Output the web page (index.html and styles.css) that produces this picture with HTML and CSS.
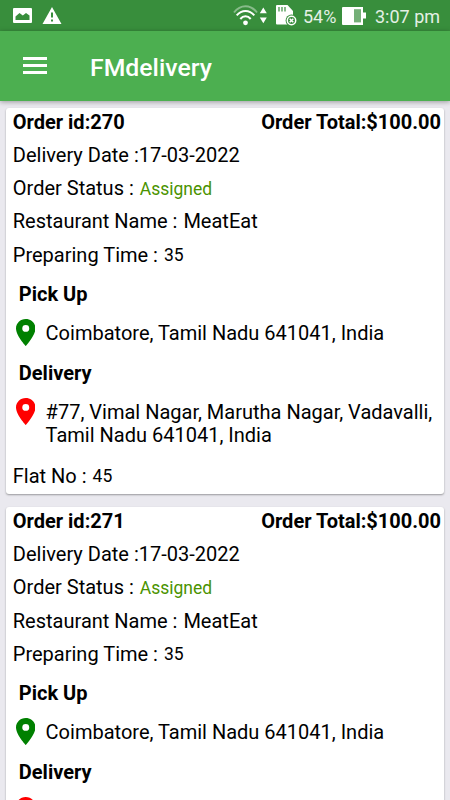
FILE: index.html
```html
<!DOCTYPE html>
<html lang="en">
<head>
    <meta charset="UTF-8">
    <meta name="viewport" content="width=device-width, initial-scale=1.0">
    <title>FMdelivery</title>
    <link rel="stylesheet" href="styles.css">
</head>
<body>
    <!-- Shared map pin shape -->
    <svg class="sprite" width="0" height="0">
        <symbol id="pin" viewBox="5 2 14 20" preserveAspectRatio="none">
            <path d="M12 2C8.13 2 5 5.13 5 9c0 5.25 7 13 7 13s7-7.75 7-13c0-3.87-3.13-7-7-7zm0 9.5a2.5 2.5 0 0 1 0-5 2.5 2.5 0 0 1 0 5z"/>
        </symbol>
    </svg>

    <div class="status-bar">
        <svg class="icon-image" width="19" height="15" viewBox="0 0 19 15">
            <path fill="#fff" fill-rule="evenodd" d="M1 0h17a1 1 0 0 1 1 1v13a1 1 0 0 1-1 1H1a1 1 0 0 1-1-1V1a1 1 0 0 1 1-1zM2.500 12h14V7.500L13 5 9.800 7.500 6.500 5 2.500 8.500z"/>
        </svg>
        <svg class="icon-warning" width="20" height="18" viewBox="0 0 20 18">
            <path fill="#fff" fill-rule="evenodd" d="M10 0l9.500 17H.5zM9 5.500v5h2v-5zM9 12.500v2h2v-2z"/>
        </svg>
        <div class="status-right">
            <svg class="icon-wifi" width="34" height="21" viewBox="0 0 34 21">
                <g fill="none" stroke="#fff" stroke-width="2">
                    <path stroke-opacity=".4" d="M1 7.500C7.500-.8 17.500-.8 24 7.500"/>
                    <path d="M3.700 10.300c5-5.800 12.600-5.800 17.600 0"/>
                    <path d="M7.300 14c3-3.700 7.400-3.700 10.400 0"/>
                </g>
                <circle cx="12.500" cy="17.800" r="2.400" fill="#fff"/>
                <path fill="#fff" d="M30.300 2.500l3.500 5.700h-7zM30.300 18.300l3.500-5.700h-7z"/>
            </svg>
            <svg class="icon-sd" width="21" height="21" viewBox="0 0 21 21">
                <path fill="#fff" d="M1 0h10.500L17 6v13.500H1a1 1 0 0 1-1-1V1a1 1 0 0 1 1-1z"/>
                <path stroke="#388e3c" stroke-width="1.200" d="M3 2v4.500M6 2v4.500M9 2v4.500"/>
                <circle cx="15.500" cy="15.500" r="5.900" fill="#388e3c"/>
                <circle cx="15.500" cy="15.500" r="4.200" fill="none" stroke="#fff" stroke-width="1.500"/>
                <path stroke="#fff" stroke-width="1.500" d="M13.700 13.700l3.600 3.600M17.300 13.700l-3.600 3.600"/>
            </svg>
            <span class="battery-level">54%</span>
            <svg class="icon-battery" width="24" height="18" viewBox="0 0 24 18">
                <path fill="#fff" d="M1 0h20v5.500h3v6h-3V18H1a1 1 0 0 1-1-1V1a1 1 0 0 1 1-1z"/>
                <path fill="#74af77" d="M12 2.200h7v13.200h-7z"/>
            </svg>
            <span class="clock">3:07 pm</span>
        </div>
    </div>

    <header class="app-bar">
        <button class="menu-button" aria-label="Menu">
            <span></span>
            <span></span>
            <span></span>
        </button>
        <h1>FMdelivery</h1>
    </header>

    <main class="orders">
        <section class="order-card">
            <div class="order-head">
                <span>Order id:270</span>
                <span>Order Total:$100.00</span>
            </div>
            <div class="row">Delivery Date :17-03-2022</div>
            <div class="row">Order Status : <span class="small assigned">Assigned</span></div>
            <div class="row">Restaurant Name : <span class="name">MeatEat</span></div>
            <div class="row">Preparing Time : <span class="small">35</span></div>
            <h2>Pick Up</h2>
            <div class="address">
                <svg class="pin pickup"><use href="#pin"/></svg>
                <p>Coimbatore, Tamil Nadu 641041, India</p>
            </div>
            <h2>Delivery</h2>
            <div class="address">
                <svg class="pin drop"><use href="#pin"/></svg>
                <p>#77, Vimal Nagar, Marutha Nagar, Vadavalli,<br>Tamil Nadu 641041, India</p>
            </div>
            <div class="row flat">Flat No : <span class="small">45</span></div>
        </section>

        <section class="order-card">
            <div class="order-head">
                <span>Order id:271</span>
                <span>Order Total:$100.00</span>
            </div>
            <div class="row">Delivery Date :17-03-2022</div>
            <div class="row">Order Status : <span class="small assigned">Assigned</span></div>
            <div class="row">Restaurant Name : <span class="name">MeatEat</span></div>
            <div class="row">Preparing Time : <span class="small">35</span></div>
            <h2>Pick Up</h2>
            <div class="address">
                <svg class="pin pickup"><use href="#pin"/></svg>
                <p>Coimbatore, Tamil Nadu 641041, India</p>
            </div>
            <h2>Delivery</h2>
            <div class="address">
                <svg class="pin drop"><use href="#pin"/></svg>
            </div>
        </section>
    </main>
</body>
</html>
```
FILE: styles.css
```css
* {
    margin: 0;
    padding: 0;
    box-sizing: border-box;
}

body {
    display: flex;
    flex-direction: column;
    height: 100vh;
    overflow: hidden;
    background: #eae9ef;
    font-family: Roboto, sans-serif;
    font-size: 20px;
    color: #000;
}

.sprite {
    position: absolute;
}

svg {
    display: block;
    flex: none;
}

/* Android status bar */
.status-bar {
    display: flex;
    align-items: center;
    flex: none;
    height: 31px;
    padding: 0 11px 0 13px;
    background: #388e3c;
    color: #e4f0e5;
    font-size: 18px;
}

.icon-warning {
    margin-left: 10px;
}

.status-right {
    display: flex;
    align-items: center;
    margin-left: auto;
    white-space: nowrap;
}

.icon-sd {
    margin-left: 9px;
}

.battery-level {
    width: 33px;
    margin-left: 6px;
    padding-top: 2px;
}

.icon-battery {
    margin-left: 6px;
}

.clock {
    width: 64px;
    margin-left: 9px;
    padding-top: 2px;
}

.app-bar {
    display: flex;
    align-items: center;
    flex: none;
    height: 70px;
    padding: 0 23px;
    background: #4caf50;
    color: #fff;
    box-shadow: 0 1px 5px rgba(0, 0, 0, 0.35);
    z-index: 1;
}

.menu-button {
    display: flex;
    flex-direction: column;
    gap: 4.5px;
    width: 24px;
    padding-bottom: 1px;
    background: none;
    border: none;
}

.menu-button span {
    height: 2.5px;
    background: #fff;
}

.app-bar h1 {
    margin-left: 43px;
    padding-top: 2.5px;
    font-size: 24.8px;
    font-weight: 500;
}

.orders {
    display: flex;
    flex-direction: column;
    flex: 1;
    gap: 12.5px;
    min-height: 0;
    padding: 6.5px 6px 0;
    overflow: hidden;
}

.order-card {
    flex: none;
    padding: 2.5px 3px 1.8px 6.8px;
    background: #fff;
    border-radius: 3px;
    box-shadow: 0 1px 2px rgba(0, 0, 0, 0.35);
}

.order-head {
    display: flex;
    justify-content: space-between;
    height: 28.4px;
    line-height: 24px;
    font-weight: 700;
}

.row {
    display: flex;
    align-items: center;
    gap: 6px;
    height: 33.2px;
}

.row.flat {
    margin-top: 6.5px;
}

.small {
    font-size: 17.5px;
    padding-top: 1px;
}

.assigned {
    color: #4a9300;
}

.order-card h2 {
    padding: 0.8px 0 0 6px;
    font-size: 20px;
    font-weight: 700;
    line-height: 44.4px;
}

.address {
    display: flex;
    align-items: flex-start;
    padding: 5px 0 5px 3px;
    line-height: 23.75px;
}

.address p {
    padding-top: 0.4px;
    margin-bottom: -0.4px;
}

.pin {
    width: 19.5px;
    height: 27px;
    margin: -2.5px 10.3px -2px 0;
}

.pickup {
    fill: #008000;
}

.drop {
    fill: #f00;
}
```
